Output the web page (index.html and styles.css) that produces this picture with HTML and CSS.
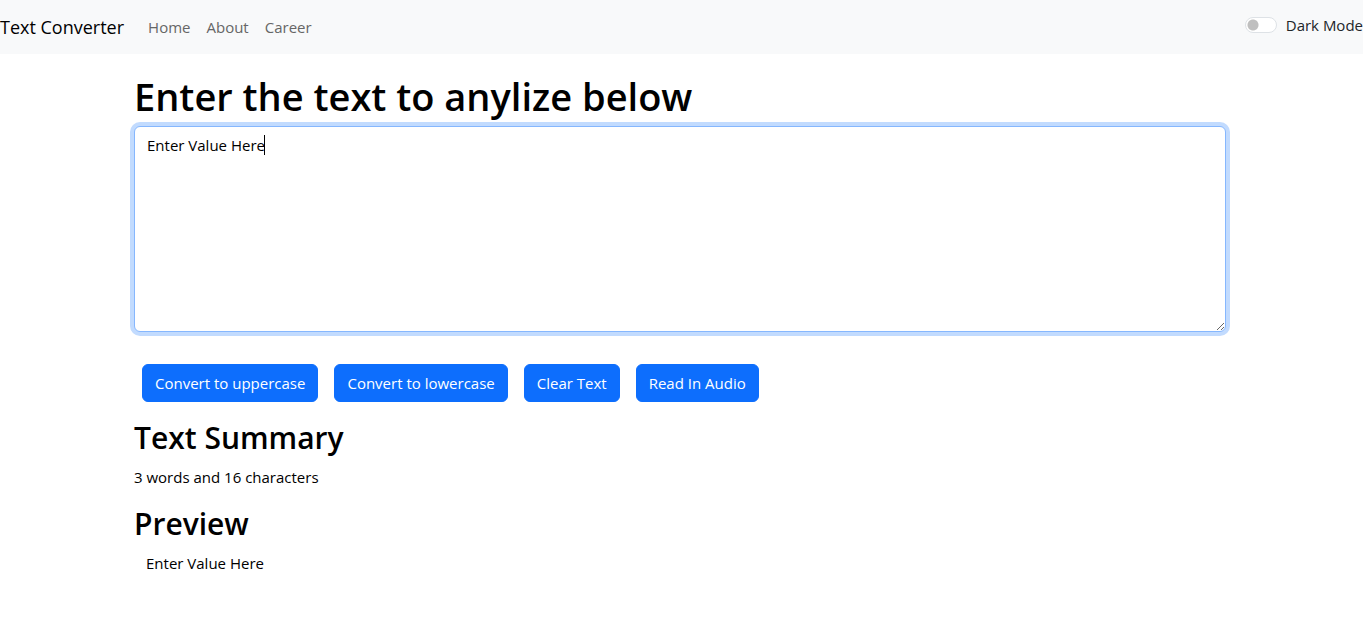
FILE: index.html
```html
<!DOCTYPE html>
<html lang="en">
<head>
  <meta charset="utf-8">
  <meta name="viewport" content="width=device-width, initial-scale=1">
  <title>Text Converter</title>
  <link rel="stylesheet" href="styles.css">
</head>
<body>
  <nav class="navbar">
    <a class="brand" href="#">Text Converter</a>
    <div class="nav-links">
      <a class="nav-link" href="#">Home</a>
      <a class="nav-link" href="#">About</a>
      <a class="nav-link" href="#">Career</a>
    </div>
    <div class="mode">
      <input class="switch" type="checkbox" role="switch" id="dark-mode">
      <label class="mode-label" for="dark-mode">Dark Mode</label>
    </div>
  </nav>
  <main class="page">
    <div class="container">
      <h1 class="title"><label for="text-box">Enter the text to anylize below</label></h1>
      <div class="editor">
        <textarea class="text-box" id="text-box" rows="8" spellcheck="false">Enter Value Here</textarea>
        <span class="caret" aria-hidden="true"></span>
      </div>
      <div class="actions">
        <button class="btn" type="button">Convert to uppercase</button>
        <button class="btn" type="button">Convert to lowercase</button>
        <button class="btn" type="button">Clear Text</button>
        <button class="btn" type="button">Read In Audio</button>
      </div>
      <section class="summary">
        <h2 class="heading">Text Summary</h2>
        <p class="count">3 words and 16 characters</p>
        <h2 class="heading">Preview</h2>
        <p class="preview">Enter Value Here</p>
      </section>
    </div>
  </main>
</body>
</html>
```
FILE: styles.css
```css
* {
  box-sizing: border-box;
}

body {
  margin: 0;
  background: #fff;
  color: #000;
  font-family: "Open Sans", "Noto Sans", sans-serif;
  font-size: 15px;
  line-height: 24px;
  overflow-x: hidden;
}

.navbar {
  display: flex;
  align-items: center;
  height: 54px;
  background: #f8f9fa;
}

.brand {
  margin-right: 16px;
  color: #000;
  font-size: 18px;
  line-height: 30px;
  text-decoration: none;
  white-space: nowrap;
}

.nav-links {
  display: flex;
}

.nav-link {
  padding: 8px;
  color: #666;
  text-decoration: none;
}

.mode {
  display: flex;
  align-items: center;
  gap: 9px;
  margin-left: auto;
  padding-bottom: 4px;
}

.switch {
  width: 32px;
  height: 16px;
  margin: 0;
  appearance: none;
  border: 1px solid #dee2e6;
  border-radius: 16px;
  background: #fff radial-gradient(circle at 7px 7px, #bfbfbf 5px, transparent 6px) no-repeat;
}

.switch:checked {
  border-color: #0d6efd;
  background: #0d6efd radial-gradient(circle at 23px 7px, #fff 5px, transparent 6px) no-repeat;
}

.mode-label {
  color: #212529;
  white-space: nowrap;
}

.page {
  padding: 18px 15px 16px 12px;
}

.container {
  max-width: 1092px;
  margin: 0 auto;
}

.title {
  margin: 0 0 6px;
  font-size: 38px;
  font-weight: 600;
  line-height: 48px;
}

.editor {
  position: relative;
}

.text-box {
  display: block;
  width: 100%;
  height: 206px;
  padding: 6px 12px;
  border: 1px solid #86b7fe;
  border-radius: 6px;
  outline: 0;
  background: #fff;
  box-shadow: 0 0 0 4px #c2dbfe;
  color: #000;
  font: inherit;
  resize: vertical;
}

.caret {
  position: absolute;
  top: 9px;
  left: 130px;
  width: 1px;
  height: 20px;
  background: #000;
}

.actions {
  display: flex;
  flex-wrap: wrap;
  gap: 16px;
  margin: 32px 8px 16px;
}

.btn {
  padding: 6px 12px;
  border: 1px solid #0d6efd;
  border-radius: 6px;
  background: #0d6efd;
  color: #fff;
  font: inherit;
}

.heading {
  margin: 0 0 8px;
  font-size: 30px;
  font-weight: 600;
  line-height: 39px;
}

.count {
  margin: 0 0 15px;
}

.preview {
  margin: 0;
  padding: 0 12px;
}
```
